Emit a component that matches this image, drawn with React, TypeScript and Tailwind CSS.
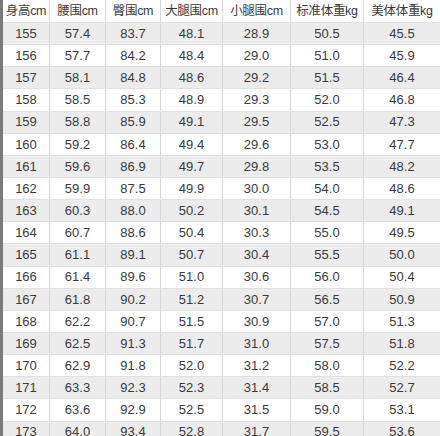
const headers = ['身高cm', '腰围cm', '臀围cm', '大腿围cm', '小腿围cm', '标准体重kg', '美体体重kg']

const rows: string[][] = [
  ['155', '57.4', '83.7', '48.1', '28.9', '50.5', '45.5'],
  ['156', '57.7', '84.2', '48.4', '29.0', '51.0', '45.9'],
  ['157', '58.1', '84.8', '48.6', '29.2', '51.5', '46.4'],
  ['158', '58.5', '85.3', '48.9', '29.3', '52.0', '46.8'],
  ['159', '58.8', '85.9', '49.1', '29.5', '52.5', '47.3'],
  ['160', '59.2', '86.4', '49.4', '29.6', '53.0', '47.7'],
  ['161', '59.6', '86.9', '49.7', '29.8', '53.5', '48.2'],
  ['162', '59.9', '87.5', '49.9', '30.0', '54.0', '48.6'],
  ['163', '60.3', '88.0', '50.2', '30.1', '54.5', '49.1'],
  ['164', '60.7', '88.6', '50.4', '30.3', '55.0', '49.5'],
  ['165', '61.1', '89.1', '50.7', '30.4', '55.5', '50.0'],
  ['166', '61.4', '89.6', '51.0', '30.6', '56.0', '50.4'],
  ['167', '61.8', '90.2', '51.2', '30.7', '56.5', '50.9'],
  ['168', '62.2', '90.7', '51.5', '30.9', '57.0', '51.3'],
  ['169', '62.5', '91.3', '51.7', '31.0', '57.5', '51.8'],
  ['170', '62.9', '91.8', '52.0', '31.2', '58.0', '52.2'],
  ['171', '63.3', '92.3', '52.3', '31.4', '58.5', '52.7'],
  ['172', '63.6', '92.9', '52.5', '31.5', '59.0', '53.1'],
  ['173', '64.0', '93.4', '52.8', '31.7', '59.5', '53.6'],
]

const cols = 'grid grid-cols-[47px_56px_55px_62px_68px_73px_76px]'

function App() {
  return (
    <div
      className="w-[440px] h-[436px] overflow-hidden bg-white border-l-[3px] border-[#7a7a7a] text-[#3a3a3a]"
      style={{ fontFamily: '"Liberation Sans", "Noto Sans CJK SC", sans-serif' }}
    >
      <div className={`${cols} h-[23px] bg-white border-b border-[#e0e0e0]`}>
        {headers.map((h, i) => (
          <div
            key={h}
            className={`flex items-center justify-center text-[12.5px] tracking-[-0.3px] ${i < 6 ? 'border-r border-[#d6d6d6]' : ''}`}
          >
            {h}
          </div>
        ))}
      </div>
      {rows.map((r, ri) => (
        <div
          key={r[0]}
          className={`${cols} h-[22.15px] border-b border-[#e0e0e0] ${ri % 2 === 0 ? 'bg-[#ececec]' : 'bg-white'}`}
        >
          {r.map((v, i) => (
            <div
              key={i}
              className={`flex items-center justify-center text-[13px] ${i < 6 ? 'border-r border-[#d6d6d6]' : ''}`}
            >
              {v}
            </div>
          ))}
        </div>
      ))}
    </div>
  )
}

export default App
